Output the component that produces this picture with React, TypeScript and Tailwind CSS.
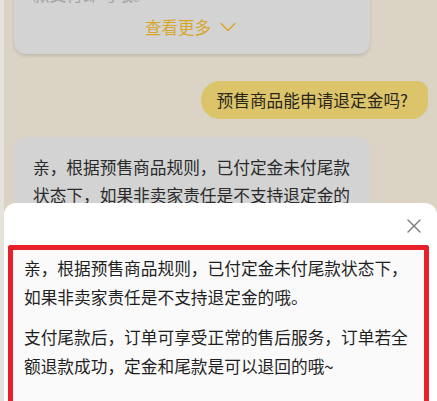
import React from "react";

export default function App() {
  const font = { fontFamily: '"Noto Sans CJK SC", "Noto Sans", sans-serif' };
  return (
    <div className="relative h-[401px] w-[437px] overflow-hidden bg-[#dbd4c5]" style={font}>
      <div className="flex h-full">
        <div className="w-[4px] shrink-0 bg-[#e6e3dc]" />
        <div className="flex flex-1 flex-col">
          {/* top bubble, partially scrolled off */}
          <div className="ml-[10px] mt-[-34px] w-[356px] rounded-[12px] bg-[#d3d3d3] pb-[16px] pl-[19px] pr-[16px] pt-[14px] shadow-[0_2px_3px_rgba(0,0,0,0.12)]">
            <div className="text-[16.7px] leading-[28px] text-[#a3a3a3]">款支付即可哦。</div>
            <div className="ml-[-6px] mt-[8px] flex items-center justify-center gap-[9px] text-[16.5px] leading-[22px] text-[#d8a62a]">
              <span>查看更多</span>
              <svg width="16" height="10" viewBox="0 0 16 10" fill="none">
                <path d="M1 1.5 L8 8.5 L15 1.5" stroke="#d8a62a" strokeWidth="1.5" strokeLinecap="round" strokeLinejoin="round" />
              </svg>
            </div>
          </div>
          {/* user bubble */}
          <div className="mr-[9px] mt-[27px] flex justify-end">
            <div className="rounded-l-[19px] rounded-br-[16px] rounded-tr-[10px] bg-[#dcc46b] pl-[16px] pr-[20px] text-[16.7px] leading-[38px] text-[#2a261c]">
              预售商品能申请退定金吗?
            </div>
          </div>
          {/* bot bubble */}
          <div className="ml-[10px] mt-[18px] w-[356px] rounded-[12px] bg-[#d3d3d3] pb-[14px] pl-[19px] pr-[14px] pt-[17px] text-[16.7px] leading-[27.5px] text-[#2a2a2a]">
            <p>亲，根据预售商品规则，已付定金未付尾款</p>
            <p>状态下，如果非卖家责任是不支持退定金的</p>
            <p>哦。</p>
          </div>
        </div>
      </div>
      {/* bottom sheet overlay */}
      <div className="absolute bottom-0 left-[4px] right-0 top-[203px] flex flex-col rounded-t-[12px] bg-white">
        <div className="flex h-[42px] items-center justify-end pr-[16px]">
          <svg width="14" height="14" viewBox="0 0 14 14" fill="none" className="mt-[4px]">
            <path d="M1 1 L13 13 M13 1 L1 13" stroke="#7a7a7a" strokeWidth="1.4" strokeLinecap="round" />
          </svg>
        </div>
        <div className="ml-[4px] mr-[8px] flex-1 rounded-t-[3px] border-[5px] border-b-0 border-[#e8202a] bg-[#fafafa] pl-[11px] pr-[8px] pt-[4px] text-[16.7px] leading-[29px] text-[#1f1f1f]">
          <p>亲，根据预售商品规则，已付定金未付尾款状态下，如果非卖家责任是不支持退定金的哦。</p>
          <p className="mt-[11px]">支付尾款后，订单可享受正常的售后服务，订单若全额退款成功，定金和尾款是可以退回的哦~</p>
        </div>
      </div>
    </div>
  );
}
